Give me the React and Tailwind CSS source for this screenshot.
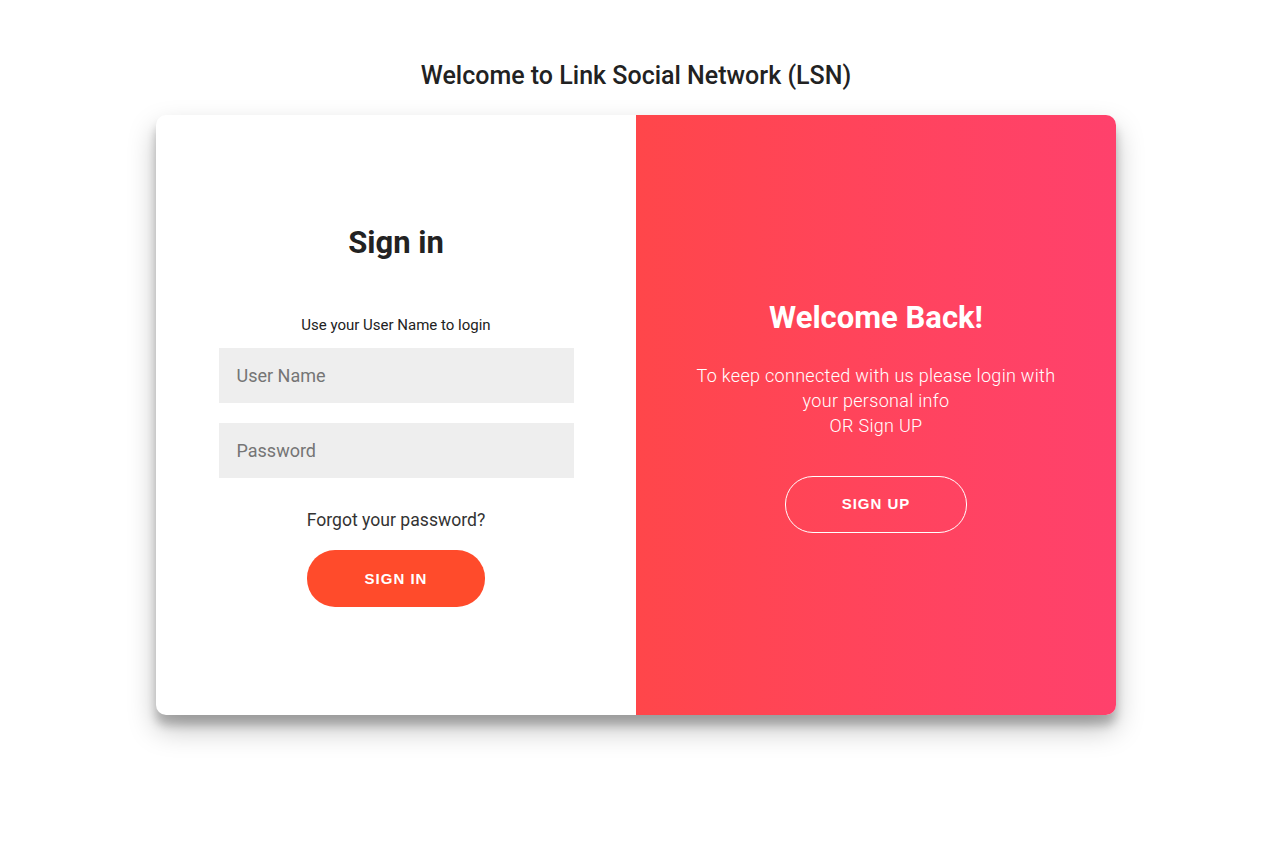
import React from "react";

export default function App() {
  return (
    <div className="min-h-screen bg-white flex flex-col items-center pl-[10px] font-['Roboto',sans-serif] text-[#222]">
      <h2 className="mt-[60px] mb-[23px] text-[25px] leading-8 font-medium text-[#222]">
        Welcome to Link Social Network (LSN)
      </h2>

      <div className="w-[960px] h-[600px] flex rounded-[10px] overflow-hidden bg-white shadow-[0_14px_28px_rgba(0,0,0,0.25),0_10px_10px_rgba(0,0,0,0.22)]">
        {/* Sign in form */}
        <form
          className="w-1/2 h-full flex flex-col items-center justify-center pt-[2px] px-[50px] text-center"
          onSubmit={(e) => e.preventDefault()}
        >
          <h1 className="text-[31px] leading-9 font-bold m-0">Sign in</h1>
          <span className="mt-[54px] text-[15px] leading-5">
            Use your User Name to login
          </span>
          <input
            type="text"
            placeholder="User Name"
            className="mt-[13px] w-[355px] h-[55px] bg-[#eee] px-[18px] text-[18px] outline-none placeholder:text-[#757575]"
          />
          <input
            type="password"
            placeholder="Password"
            className="mt-[20px] w-[355px] h-[55px] bg-[#eee] px-[18px] text-[18px] outline-none placeholder:text-[#757575]"
          />
          <a href="#" className="mt-[30px] text-[17.6px] leading-6 text-[#333]">
            Forgot your password?
          </a>
          <button
            type="submit"
            className="mt-[18px] w-[178px] h-[57px] pt-[1px] rounded-[28px] bg-[#FF4B2B] text-white font-['Liberation_Sans',Arial,sans-serif] text-[15px] font-bold tracking-[1px] uppercase"
          >
            Sign In
          </button>
        </form>

        {/* Overlay panel */}
        <div className="w-1/2 h-full flex flex-col items-center justify-center pt-[2px] px-[45px] text-center text-white bg-gradient-to-r from-[#FF464A] to-[#FF416C]">
          <h1 className="text-[31px] leading-9 font-bold">Welcome Back!</h1>
          <p className="mt-[27px] text-[18px] leading-[25px] font-light tracking-[0.3px]">
            To keep connected with us please login with your personal info
            <br />
            OR Sign UP
          </p>
          <button className="mt-[38px] w-[182px] h-[57px] pt-[1px] rounded-[28px] border border-white bg-transparent text-white font-['Liberation_Sans',Arial,sans-serif] text-[15px] font-bold tracking-[1px] uppercase">
            Sign Up
          </button>
        </div>
      </div>
    </div>
  );
}
